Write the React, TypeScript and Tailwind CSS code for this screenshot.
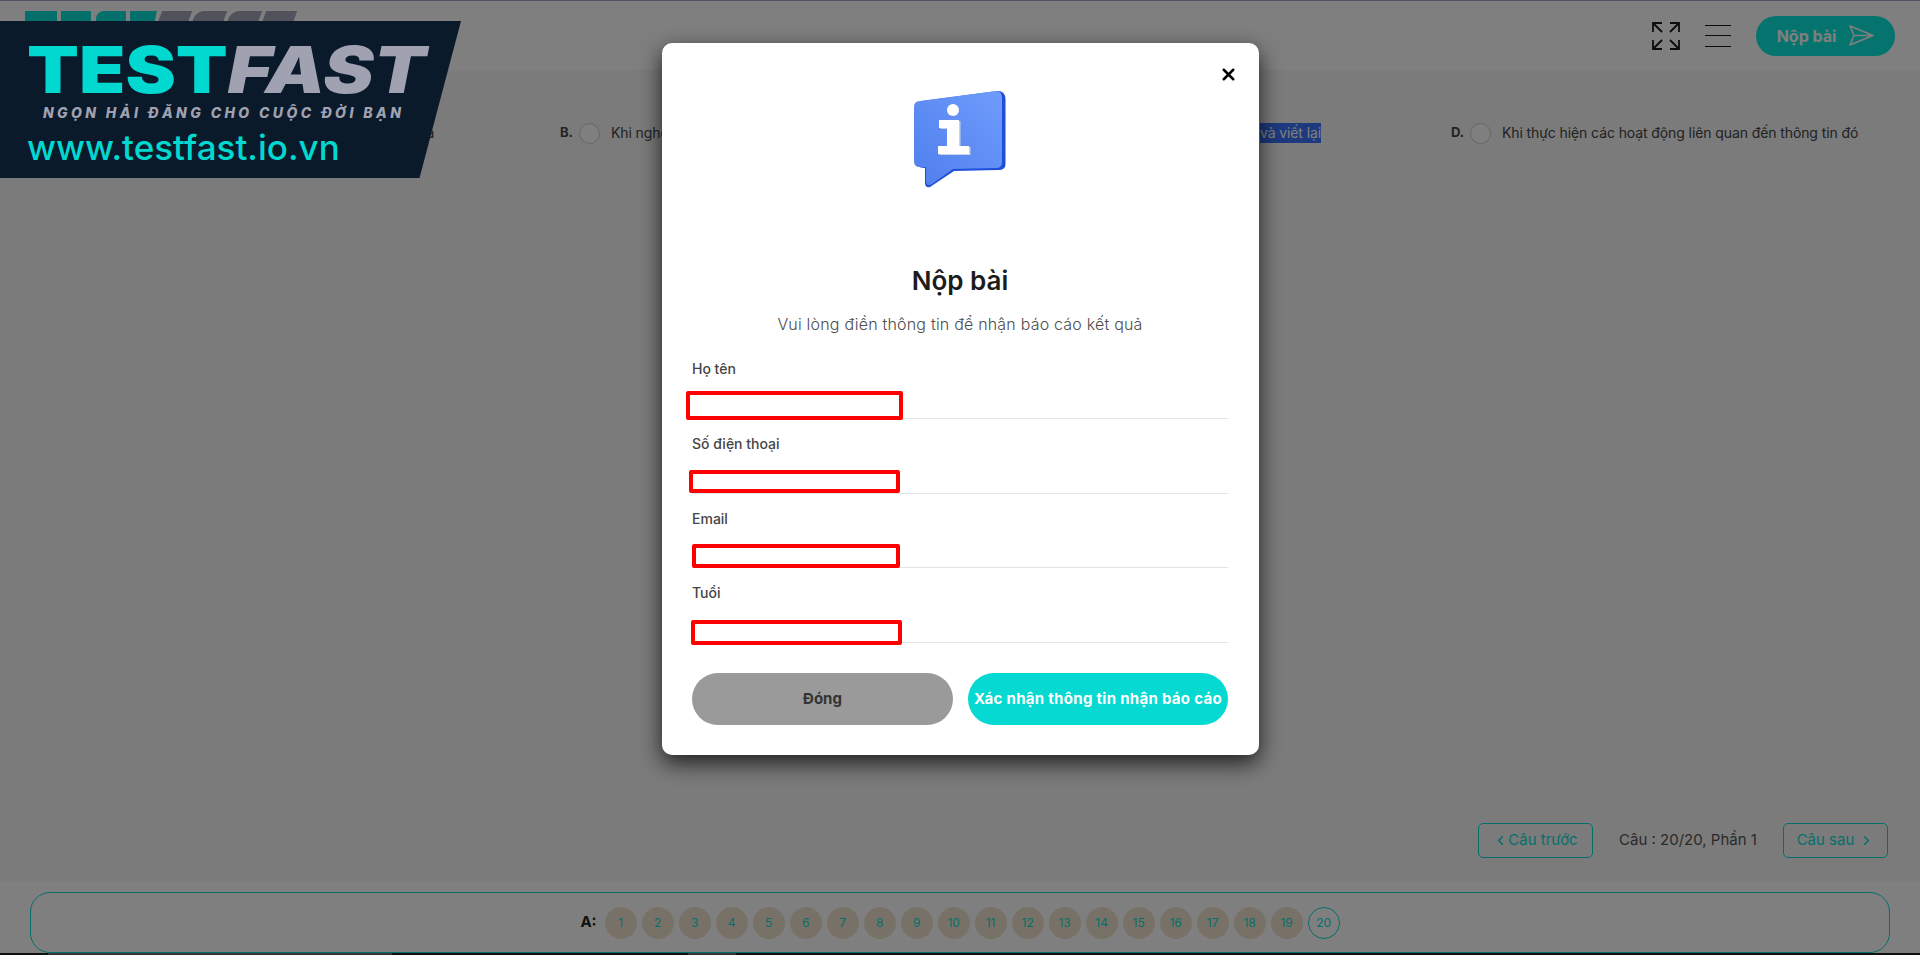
import { ChevronLeft, ChevronRight, X } from "lucide-react"

const font = "font-['Inter','Noto_Sans',sans-serif]"
const numbers = Array.from({ length: 20 }, (_, i) => i + 1)

const options = [
  { key: "A.", text: "Khi đọc lại và sắp xếp thông tin đã nhớ ra", selected: "" },
  { key: "B.", text: "Khi nghe và ghi nhớ lại thông tin", selected: "" },
  { key: "C.", text: "Khi đọc ghi nhớ thông tin đó ra ", selected: "và viết lại" },
  { key: "D.", text: "Khi thực hiện các hoạt động liên quan đến thông tin đó", selected: "" },
]

const fields = [
  { label: "Họ tên", row: "h-[75px]", box: "left-[-6px] w-[217px] top-[47px] h-[29px]" },
  { label: "Số điện thoại", row: "h-[75px]", box: "left-[-3px] w-[211px] top-[51px] h-[23px]" },
  { label: "Email", row: "h-[74px]", box: "left-0 w-[208px] top-[50px] h-[24px]" },
  { label: "Tuổi", row: "h-[75px]", box: "left-[-1px] w-[211px] top-[52px] h-[25px]" },
]

function ExpandIcon() {
  return (
    <svg width="30" height="30" viewBox="0 0 30 30" fill="none" stroke="#1a1a1a" strokeWidth="1.8">
      <path d="M2 11V2h9M2 2l9 9" />
      <path d="M28 11V2h-9M28 2l-9 9" />
      <path d="M2 19v9h9M2 28l9-9" />
      <path d="M28 19v9h-9M28 28l-9-9" />
    </svg>
  )
}

function SendIcon() {
  return (
    <svg width="25" height="21" viewBox="0 0 25 21" fill="none" stroke="#ffffff" strokeWidth="1.6" strokeLinejoin="round">
      <path d="M1 1l23 9.500L1 20l4-9.500zM5 10.500h19" />
    </svg>
  )
}

function InfoBubble() {
  return (
    <svg width="92" height="98" viewBox="0 0 92 98" fill="none">
      <defs>
        <linearGradient id="bubble" x1="0" y1="1" x2="1" y2="0">
          <stop offset="0" stopColor="#4f7fee" />
          <stop offset="1" stopColor="#6f9bfb" />
        </linearGradient>
      </defs>
      <path d="M8 11L84 1q7 0 7.500 8v65q0 6-7 6L40 81 16 97q-5 1-5-4V78q-10 0-10-7V19q0-7 7-8z" fill="#1f4fd8" />
      <path d="M6 11L82 1q6 0 6 7v64q0 6-6 6l-43 1-21 15q-5 3-6-2V77H6q-6 0-6-6V17q0-6 6-6z" fill="url(#bubble)" />
      <circle cx="39" cy="20" r="6" fill="#ffffff" />
      <path d="M25 30h20v26h10v8H24v-8h9V38h-8z" fill="#c9d2e6" transform="translate(1.500 1)" />
      <path d="M25 30h20v26h10v8H24v-8h9V38h-8z" fill="#ffffff" />
    </svg>
  )
}

export default function App() {
  return (
    <div className={`relative flex h-[955px] flex-col overflow-hidden bg-white ${font}`}>
      <header className="flex h-[70px] shrink-0 items-center justify-between border-t border-[#a9a4c4] bg-white pl-[25px] pr-[25px]">
        <div className="flex self-start pt-[10px]">
          <span className="h-[12px] w-[32px] bg-[#0ae0d6]" />
          <span className="ml-[4px] h-[12px] w-[30px] bg-[#0ae0d6]" />
          <span className="ml-[5px] h-[12px] w-[30px] rounded-tl-lg bg-[#0ae0d6]" />
          <span className="ml-[4px] h-[12px] w-[27px] bg-[#0ae0d6] [clip-path:polygon(0_0,100%_0,90%_100%,0_100%)]" />
          <span className="ml-[3px] h-[12px] w-[30px] -skew-x-[20deg] bg-[#a4a4b8]" />
          <span className="ml-[4px] h-[12px] w-[31px] -skew-x-[20deg] rounded-tl-lg bg-[#a4a4b8]" />
          <span className="ml-[4px] h-[12px] w-[31px] -skew-x-[20deg] rounded-tl-lg bg-[#a4a4b8]" />
          <span className="ml-[4px] h-[12px] w-[31px] -skew-x-[20deg] bg-[#a4a4b8]" />
        </div>
        <div className="flex items-center">
          <ExpandIcon />
          <div className="ml-[24px] flex h-[22px] w-[26px] flex-col justify-between">
            <span className="h-px bg-[#1a1a1a]" />
            <span className="h-px bg-[#1a1a1a]" />
            <span className="h-px bg-[#1a1a1a]" />
          </div>
          <button className="ml-[25px] flex h-[40px] w-[139px] items-center justify-center gap-[13px] rounded-full bg-[#0ae8dc] text-[16px] font-bold text-white">
            Nộp bài
            <SendIcon />
          </button>
        </div>
      </header>

      <main className="flex flex-1 flex-col justify-between bg-[#f6f6f6]">
        <div className="grid grid-cols-[445px_445px_446px_445px] pl-[115px] pt-[53px] text-[14px] tracking-[-0.1px] text-[#444444]">
          {options.map((o) => (
            <div key={o.key} className="flex h-[20px] items-center whitespace-nowrap">
              <b className="w-[18px] text-[13px]">{o.key}</b>
              <span className="ml-[1px] h-[21px] w-[21px] shrink-0 rounded-full border border-[#cccccc] bg-white" />
              <span className="ml-[11px] leading-[20px]">
                {o.text}
                {o.selected && <span className="inline-block bg-[#3b74fe] leading-[20px] text-white">{o.selected}</span>}
              </span>
            </div>
          ))}
        </div>
        <div className="flex items-center justify-end pb-[24px] pr-[32px] text-[15px]">
          <button className="flex h-[35px] w-[115px] items-center justify-center rounded-[5px] border border-[#0ae0d6] text-[#0ae0d6]">
            <ChevronLeft size={15} strokeWidth={2.500} />
            Câu trước
          </button>
          <span className="mx-[26px] w-[138px] whitespace-nowrap text-center text-[#555555]">Câu : 20/20, Phần 1</span>
          <button className="flex h-[35px] w-[105px] items-center justify-center gap-[5px] rounded-[5px] border border-[#0ae0d6] text-[#0ae0d6]">
            Câu sau
            <ChevronRight size={15} strokeWidth={2.500} />
          </button>
        </div>
      </main>

      <footer className="h-[73px] shrink-0 bg-white px-[30px] pt-[10px]">
        <div className="flex h-[61px] items-center justify-center gap-[5px] rounded-[20px] border border-[#0ae0d6]">
          <b className="mr-[3px] text-[15px] text-[#222222]">A:</b>
          {numbers.map((n) => (
            <span
              key={n}
              className={
                n === 20
                  ? "flex h-[32px] w-[32px] items-center justify-center rounded-full border border-[#0ae0d6] text-[12px] text-[#0ae0d6]"
                  : "flex h-[32px] w-[32px] items-center justify-center rounded-full bg-[#f0e3ce] text-[12px] text-[#0ae0d6]"
              }
            >
              {n}
            </span>
          ))}
        </div>
      </footer>

      <div className="absolute inset-x-0 bottom-0 flex h-[2px]">
        <span className="w-[48px] bg-[#222222]" />
        <span className="w-[344px] bg-[#6e6e6e]" />
        <span className="w-[296px] bg-[#222222]" />
        <span className="w-[48px] bg-[#6e6e6e]" />
        <span className="flex-1 bg-[#222222]" />
      </div>

      <div className="absolute inset-0 flex items-start justify-center bg-black/50 pl-[1px] pt-[43px]">
        <div className="relative h-[712px] w-[597px] rounded-[10px] bg-white pl-[30px] pr-[31px] shadow-[0_8px_22px_rgba(0,0,0,0.75)]">
          <button className="absolute right-[21px] top-[22px] text-black">
            <X size={19} strokeWidth={3.200} />
          </button>
          <div className="flex justify-center pt-[47px]">
            <InfoBubble />
          </div>
          <h2 className="mt-[77px] text-center text-[26px] font-semibold leading-[32px] text-[#1c1c1c]">Nộp bài</h2>
          <p className="mt-[15px] whitespace-nowrap text-center text-[16px] font-light leading-[24px] tracking-[0.2px] text-[#4d4d4d]">
            Vui lòng điền thông tin để nhận báo cáo kết quả
          </p>
          <div className="mt-[8px] flex flex-col">
            {fields.map((f) => (
              <div key={f.label} className={`relative border-b border-[#e3e3ea] ${f.row}`}>
                <label className="block pt-[16px] text-[14px] font-medium leading-[18px] text-[#444444]">{f.label}</label>
                <div className={`absolute rounded-[2px] border-4 border-[#ff0000] ${f.box}`} />
              </div>
            ))}
          </div>
          <div className="mt-[30px] flex justify-between">
            <button className="h-[52px] w-[261px] rounded-[26px] bg-[#9a9a9a] text-[15px] font-bold text-[#333333]">Đóng</button>
            <button className="h-[52px] w-[260px] whitespace-nowrap rounded-[26px] bg-[#06d9d1] text-[15px] font-bold tracking-[0.3px] text-white">
              Xác nhận thông tin nhận báo cáo
            </button>
          </div>
        </div>
      </div>

      <div className="absolute left-0 top-[21px] h-[157px] w-[461px] bg-[#0a1a2b] [clip-path:polygon(0_0,100%_0,91%_100%,0_100%)]">
        <div className="ml-[27px] flex h-[56px] origin-left scale-x-[1.165] pt-[21px] text-[65px] font-black leading-[56px]">
          <span className="text-[#00d8d0]">TEST</span>
          <span className="italic text-[#a0a2b2]">FAST</span>
        </div>
        <p className="mt-[27px] whitespace-nowrap pl-[43px] text-[14px] font-extrabold italic leading-[18px] tracking-[3.400px] text-[#a0a2b2]">
          NGỌN HẢI ĐĂNG CHO CUỘC ĐỜI BẠN
        </p>
        <p className="mt-[5px] whitespace-nowrap pl-[27px] text-[35px] font-medium leading-[40px] text-[#00d8d0]">www.testfast.io.vn</p>
      </div>
    </div>
  )
}
